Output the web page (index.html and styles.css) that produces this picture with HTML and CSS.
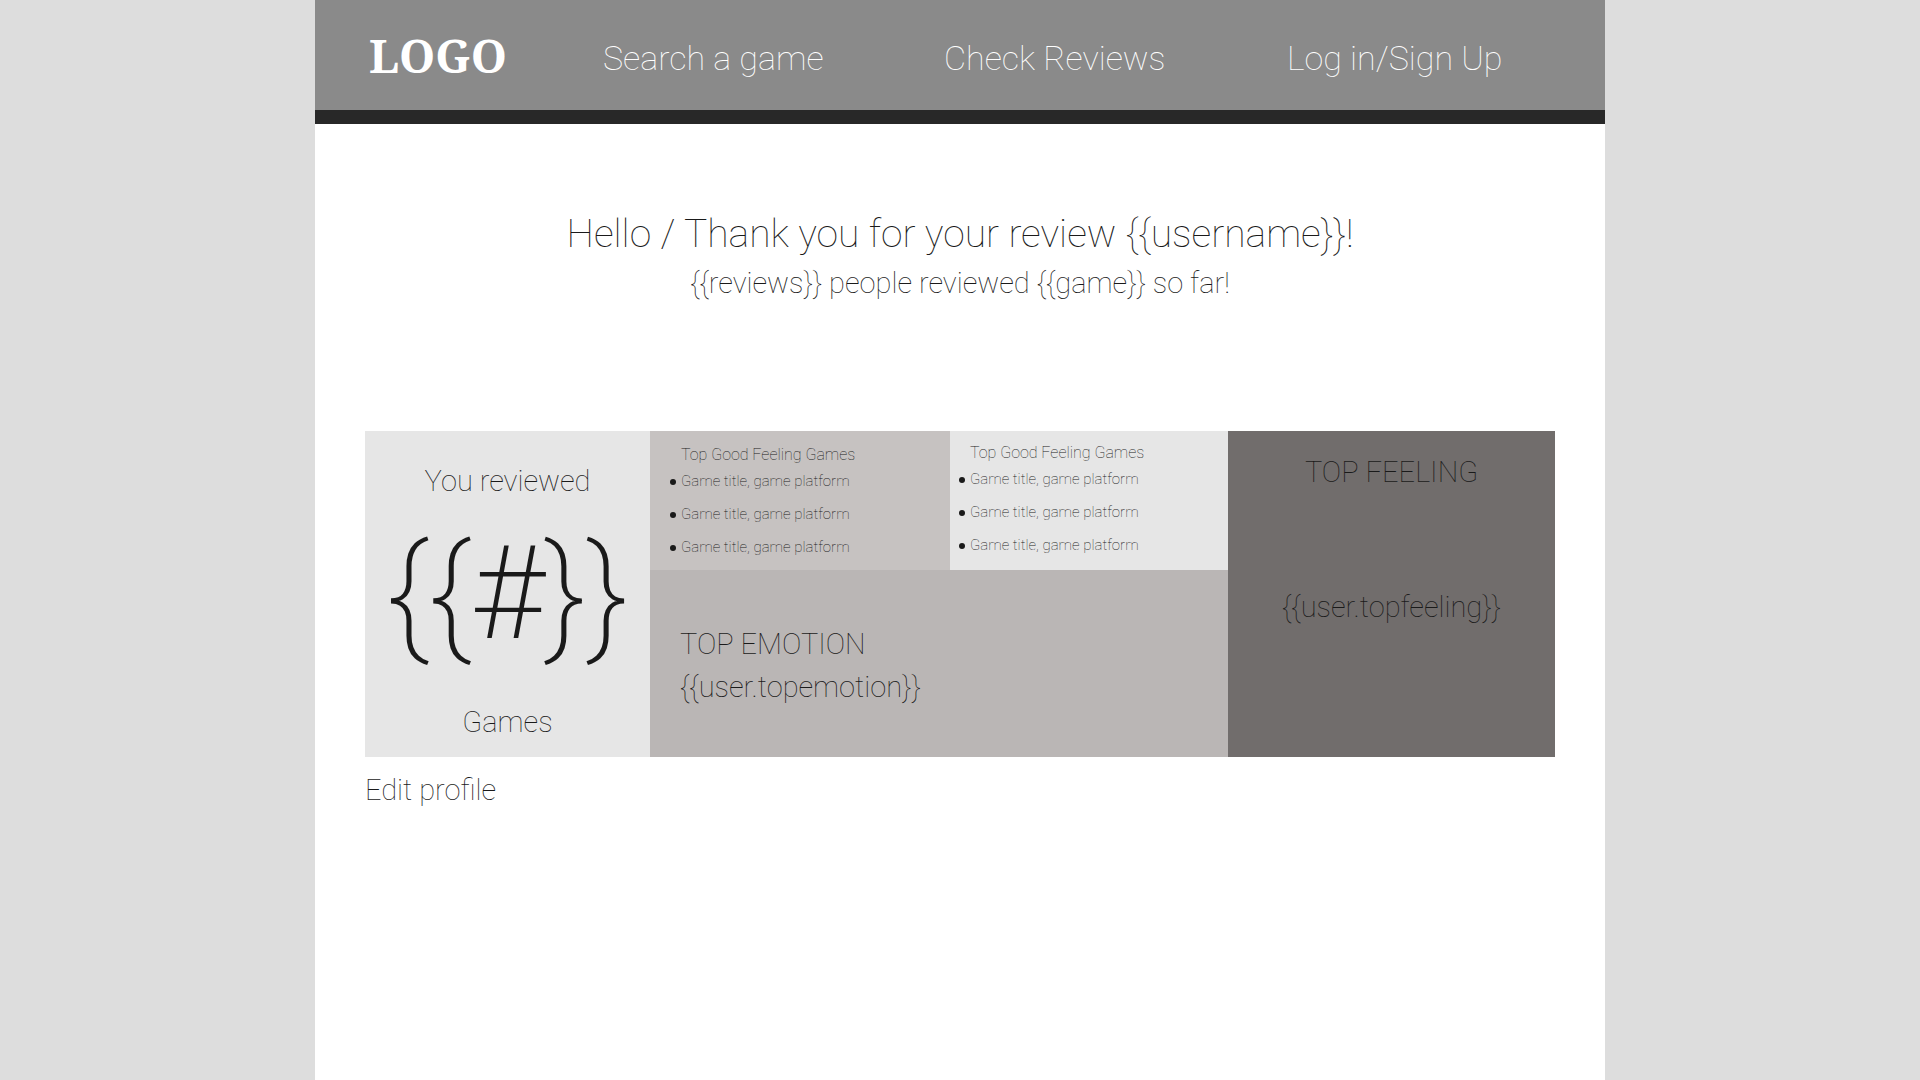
FILE: index.html
```html
<!DOCTYPE html>
<html lang="en">
<head>
<meta charset="utf-8">
<meta name="viewport" content="width=device-width, initial-scale=1">
<title>Profile</title>
<link rel="stylesheet" href="styles.css">
</head>
<body>
<div class="page">
  <header class="site-header">
    <a class="logo" href="#">LOGO</a>
    <nav class="site-nav">
      <a href="#">Search a game</a>
      <a href="#">Check Reviews</a>
      <a href="#">Log in/Sign Up</a>
    </nav>
  </header>
  <main class="content">
    <section class="greeting">
      <h1>Hello / Thank you for your review {{username}}!</h1>
      <p>{{reviews}} people reviewed {{game}} so far!</p>
    </section>
    <div class="stats">
      <section class="card reviewed">
        <p>You reviewed</p>
        <p class="count">{{#}}</p>
        <p>Games</p>
      </section>
      <section class="card games games-first">
        <h2>Top Good Feeling Games</h2>
        <ul>
          <li>Game title, game platform</li>
          <li>Game title, game platform</li>
          <li>Game title, game platform</li>
        </ul>
      </section>
      <section class="card games games-second">
        <h2>Top Good Feeling Games</h2>
        <ul>
          <li>Game title, game platform</li>
          <li>Game title, game platform</li>
          <li>Game title, game platform</li>
        </ul>
      </section>
      <section class="card emotion">
        <h2>TOP EMOTION</h2>
        <p>{{user.topemotion}}</p>
      </section>
      <section class="card feeling">
        <h2>TOP FEELING</h2>
        <p>{{user.topfeeling}}</p>
      </section>
    </div>
    <a class="edit-link" href="#">Edit profile</a>
  </main>
</div>
</body>
</html>
```
FILE: styles.css
```css
* {
  box-sizing: border-box;
}

body {
  margin: 0;
  background: #dddddd;
  color: #1a1a1a;
  font-family: Roboto, "Liberation Sans", sans-serif;
  font-weight: 150;
  font-size: 29px;
  line-height: 40px;
}

h1, h2, p, ul {
  margin: 0;
  padding: 0;
  font-weight: inherit;
}

h2 {
  font-size: inherit;
}

a {
  color: inherit;
  text-decoration: none;
}

.page {
  max-width: 1290px;
  min-height: 100vh;
  margin: 0 auto;
  background: #ffffff;
}

.site-header {
  display: grid;
  grid-template-columns: 234fr 1002fr;
  align-items: center;
  min-height: 124px;
  padding-left: 54px;
  border-bottom: 14px solid #282828;
  background: #8a8a8a;
  color: #ffffff;
}

.logo {
  font-family: "Noto Serif", "DejaVu Serif Condensed", "DejaVu Serif", serif;
  font-size: 46px;
  font-weight: 700;
}

.site-nav {
  display: grid;
  grid-template-columns: 341fr 343fr 318fr;
  padding-top: 6px;
  font-size: 34px;
}

.content {
  padding: 86px 50px 40px;
}

.greeting {
  display: flex;
  flex-direction: column;
  gap: 5px;
  margin-bottom: 128px;
  text-align: center;
}

.greeting h1 {
  font-size: 39px;
  line-height: 48px;
}

.stats {
  display: grid;
  grid-template-columns: 285fr 300fr 278fr 327fr;
  grid-template-rows: 139px auto;
  grid-template-areas:
    "reviewed first second feeling"
    "reviewed emotion emotion feeling";
}

.reviewed {
  grid-area: reviewed;
  padding: 30px 0 15px;
  background: #e6e6e6;
  text-align: center;
}

.count {
  margin: 13px 0 28px;
  font-size: 130px;
  font-weight: 200;
  line-height: 160px;
}

.games {
  font-size: 15px;
  line-height: 33px;
}

.games h2 {
  padding-left: 11px;
  font-size: 16px;
  line-height: 20px;
}

.games ul {
  list-style: none;
}

.games li {
  display: flex;
  align-items: center;
  gap: 5px;
}

.games li::before {
  content: "";
  width: 6px;
  height: 6px;
  border-radius: 50%;
  background: #1a1a1a;
}

.games-first {
  grid-area: first;
  padding: 14px 0 0 20px;
  background: #c6c2c1;
}

.games-second {
  grid-area: second;
  padding: 12px 0 0 9px;
  background: #e6e6e6;
}

.emotion {
  grid-area: emotion;
  padding: 54px 30px 50px;
  background: #bab6b5;
}

.emotion p {
  margin-top: 3px;
}

.feeling {
  grid-area: feeling;
  padding-top: 21px;
  background: #716d6c;
  text-align: center;
}

.feeling p {
  margin-top: 95px;
}

.edit-link {
  display: inline-block;
  margin-top: 13px;
}
```
